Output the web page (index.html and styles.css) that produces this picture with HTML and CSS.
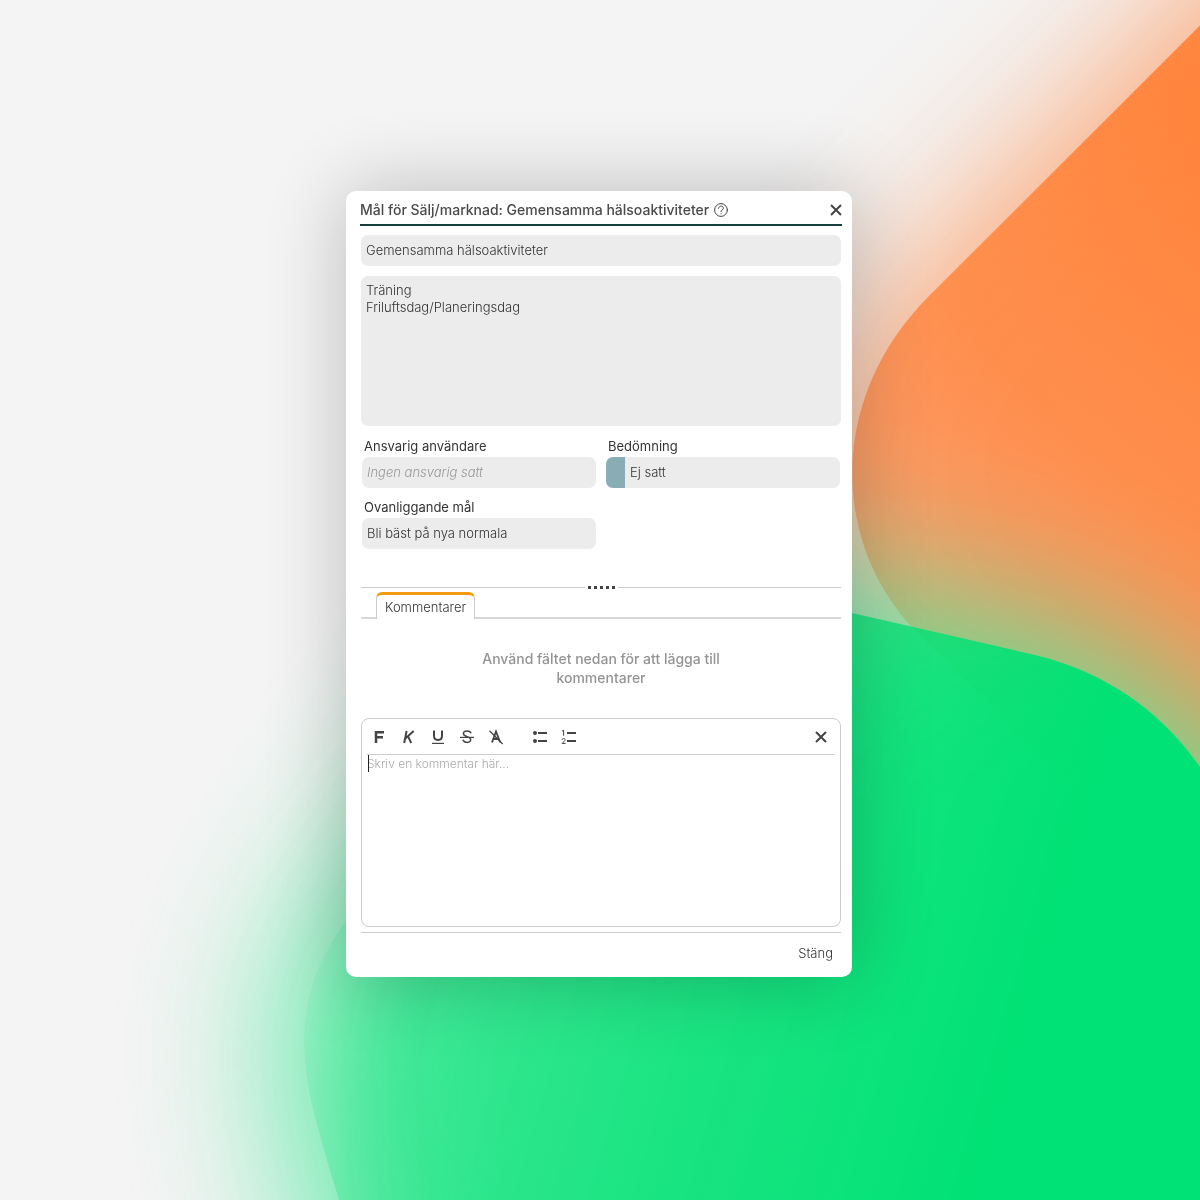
FILE: index.html
```html
<!DOCTYPE html>
<html lang="sv">
<head>
    <meta charset="UTF-8">
    <meta name="viewport" content="width=device-width, initial-scale=1.0">
    <title>Mål för Sälj/marknad</title>
    <link rel="stylesheet" href="styles.css">
</head>
<body>

    <svg class="background" viewBox="0 0 1200 1200" preserveAspectRatio="xMidYMid slice" aria-hidden="true">
        <defs>
            <linearGradient id="orange" gradientUnits="userSpaceOnUse" x1="1180" y1="100" x2="850" y2="500">
                <stop offset="0" stop-color="#ff8136"/>
                <stop offset="0.6" stop-color="#ff8b48"/>
                <stop offset="1" stop-color="#fb9a64"/>
            </linearGradient>
            <linearGradient id="green" gradientUnits="userSpaceOnUse" x1="300" y1="980" x2="980" y2="1180">
                <stop offset="0" stop-color="#00e275" stop-opacity="0.05"/>
                <stop offset="0.15" stop-color="#00e275" stop-opacity="0.3"/>
                <stop offset="0.5" stop-color="#00e275" stop-opacity="0.65"/>
                <stop offset="1" stop-color="#00e275"/>
            </linearGradient>
            <filter id="blur" x="-50%" y="-50%" width="200%" height="200%" color-interpolation-filters="sRGB">
                <feGaussianBlur stdDeviation="80"/>
            </filter>
            <path id="orangeShape" d="M1500 -274 L930 295 C830 394 830 536 910 625 L1500 1220 Z"/>
            <path id="greenShape" d="M1200 767 C1160 710 1105 672 1035 655 L852 613 C700 590 560 670 480 740 L362 900 C303 970 295 1030 312 1105 Q322 1145 339 1200 L400 1500 H1500 V1000 Z"/>
        </defs>
        <use href="#orangeShape" fill="#ff8a48" stroke="#ff8a48" stroke-width="40" opacity="0.75" filter="url(#blur)"/>
        <use href="#orangeShape" fill="url(#orange)" fill-opacity="0.92"/>
        <use href="#greenShape" fill="#48e89a" stroke="#48e89a" stroke-width="40" opacity="0.92" filter="url(#blur)"/>
        <use href="#greenShape" fill="url(#green)"/>
    </svg>

    <main class="page">
        <section class="dialog" role="dialog" aria-labelledby="dialogTitle">
            <header class="dialog-header">
                <h1 id="dialogTitle">Mål för Sälj/marknad: Gemensamma hälsoaktiviteter</h1>
                <button type="button" class="icon-button help" aria-label="Hjälp">
                    <svg width="14" height="14" viewBox="0 0 14 14" fill="none" stroke="#444" stroke-linecap="round">
                        <circle cx="7" cy="7" r="6.4"/>
                        <path d="M4.5 5.3 C4.7 2.3 9.6 2.4 9.4 5.2 C9.3 6.9 7 6.7 7 8.6 M7 10.7 V10.8"/>
                    </svg>
                </button>
                <button type="button" class="icon-button close" aria-label="Stäng fönstret">
                    <svg width="12" height="12" viewBox="0 0 12 12" stroke="#444" stroke-width="2">
                        <path d="M1 1 L11 11 M11 1 L1 11"/>
                    </svg>
                </button>
            </header>

            <form class="dialog-body">
                <input type="text" class="field" aria-label="Namn" value="Gemensamma hälsoaktiviteter" readonly>
                <textarea class="field description" aria-label="Beskrivning" readonly>Träning
Friluftsdag/Planeringsdag</textarea>

                <div class="form-grid">
                    <div class="form-group">
                        <label for="ansvarig">Ansvarig användare</label>
                        <input type="text" class="field" id="ansvarig" placeholder="Ingen ansvarig satt" readonly>
                    </div>
                    <div class="form-group">
                        <label for="bedomning">Bedömning</label>
                        <input type="text" class="field rating" id="bedomning" value="Ej satt" readonly>
                    </div>
                    <div class="form-group">
                        <label for="overliggande">Ovanliggande mål</label>
                        <input type="text" class="field" id="overliggande" value="Bli bäst på nya normala" readonly>
                    </div>
                </div>

                <div class="splitter">
                    <span class="dots"><i></i><i></i><i></i><i></i><i></i></span>
                </div>

                <div class="tabs" role="tablist">
                    <button type="button" class="tab" role="tab" aria-selected="true">Kommentarer</button>
                </div>

                <p class="empty-text">Använd fältet nedan för att lägga till kommentarer</p>

                <div class="editor">
                    <div class="toolbar">
                        <button type="button" class="icon-button" aria-label="Fet">
                            <svg width="16" height="16" viewBox="0 0 16 16" fill="none" stroke="#444" stroke-width="2.5">
                                <path d="M4 14 V2 M3 3.2 H12 M4 8.3 H11"/>
                            </svg>
                        </button>
                        <button type="button" class="icon-button" aria-label="Kursiv">
                            <svg width="16" height="16" viewBox="0 0 16 16" fill="none" stroke="#444" stroke-width="2">
                                <path d="M5.6 2 L3.2 14 M12.7 2 L4.4 9.5 M7.1 7.3 L10.2 14"/>
                            </svg>
                        </button>
                        <button type="button" class="icon-button" aria-label="Understruken">
                            <svg width="16" height="16" viewBox="0 0 16 16" fill="none" stroke="#444" stroke-width="2">
                                <path d="M4 1.5 V7 C4 12.2 12 12.2 12 7 V1.5"/>
                                <path stroke-width="1.2" d="M2 14.4 H14"/>
                            </svg>
                        </button>
                        <button type="button" class="icon-button" aria-label="Genomstruken">
                            <svg width="16" height="16" viewBox="0 0 16 16" fill="none" stroke="#444" stroke-width="1.5">
                                <path d="M12 4.3 C11.2 1 4.2 1.1 4.4 4.6 C4.5 6.5 6.3 7 8 7.6 C10.4 8.4 12 9.2 11.7 11 C11.2 14.2 4.9 14.2 4 10.8"/>
                                <path stroke-width="1.2" d="M1 8.4 H15"/>
                            </svg>
                        </button>
                        <button type="button" class="icon-button" aria-label="Rensa formatering">
                            <svg width="16" height="16" viewBox="0 0 16 16" fill="none" stroke="#444" stroke-width="1.8">
                                <path d="M4 13.5 L8 2.5 L12.3 13.5 M5.5 10 H11"/>
                                <path stroke-width="1.3" d="M1.5 1.8 L14.7 15"/>
                            </svg>
                        </button>
                        <button type="button" class="icon-button list-start" aria-label="Punktlista">
                            <svg width="16" height="16" viewBox="0 0 16 16" fill="#444">
                                <circle cx="3" cy="4" r="2"/>
                                <circle cx="3" cy="12" r="2"/>
                                <path d="M6 3 H15 V5 H6 Z M6 11 H15 V13 H6 Z"/>
                            </svg>
                        </button>
                        <button type="button" class="icon-button" aria-label="Numrerad lista">
                            <svg width="16" height="16" viewBox="0 0 16 16" fill="none" stroke="#444">
                                <path stroke-width="2" d="M6 4 H15 M6 12 H15"/>
                                <path d="M1 2.2 L2.6 1.2 V6.8 M1 10.8 C1.2 9 4.5 9.2 4.1 11 C3.9 12 2 13.2 1.1 14.4 H4.7"/>
                            </svg>
                        </button>
                        <button type="button" class="icon-button close" aria-label="Stäng kommentar">
                            <svg width="12" height="12" viewBox="0 0 12 12" stroke="#444" stroke-width="2">
                                <path d="M1 1 L11 11 M11 1 L1 11"/>
                            </svg>
                        </button>
                    </div>
                    <div class="comment">
                        <span class="caret"></span>
                        <textarea aria-label="Kommentar" placeholder="Skriv en kommentar här..."></textarea>
                    </div>
                </div>
            </form>

            <footer class="dialog-footer">
                <button type="button">Stäng</button>
            </footer>
        </section>
    </main>

</body>
</html>
```
FILE: styles.css
```css
* {
    margin: 0;
    padding: 0;
    box-sizing: border-box;
}
body {
    font-family: Inter, "Open Sans", sans-serif;
    font-size: 13px;
    font-weight: 300;
    color: #333;
    background-color: #f4f4f4;
}
button, input, textarea {
    font: inherit;
    color: inherit;
    border: none;
    outline: none;
    background: none;
}
button {
    cursor: pointer;
}
.background {
    position: fixed;
    inset: 0;
    width: 100%;
    height: 100%;
    z-index: -1;
}
.page {
    min-height: 100vh;
    display: flex;
    align-items: center;
    justify-content: center;
    padding: 0 2px 32px 0;
}
.dialog {
    width: 100%;
    max-width: 506px;
    background-color: #fff;
    border-radius: 10px;
    box-shadow: 0 0 80px rgba(0, 0, 0, 0.24);
}
.dialog-header {
    display: flex;
    align-items: center;
    height: 35px;
    margin: 0 10px 9px 14px;
    padding-top: 4px;
    border-bottom: 2px solid #153f3b;
}
.dialog-header h1 {
    font-size: 14px;
    font-weight: 500;
    color: #4a4a4a;
}
.icon-button {
    display: flex;
    align-items: center;
    justify-content: center;
}
.help {
    margin-left: 5px;
}
.close {
    margin-left: auto;
}
.dialog-body {
    padding: 0 11px 0 15px;
}
.field {
    display: block;
    width: 100%;
    height: 31px;
    padding: 0 5px 2px;
    border-radius: 7px;
    background-color: #ececec;
}
.description {
    height: 150px;
    margin-top: 10px;
    padding-top: 6px;
    line-height: 17px;
    resize: none;
}
.form-grid {
    display: grid;
    grid-template-columns: 1fr 1fr;
    gap: 10px;
    padding: 11px 1px 0;
}
.form-group label {
    display: block;
    padding: 0 2px 2px;
    line-height: 18px;
    font-weight: 400;
}
.field::placeholder {
    color: #999;
    font-style: italic;
}
.rating {
    padding-left: 24px;
    background-image: linear-gradient(#88adb5, #88adb5);
    background-size: 19px 100%;
    background-repeat: no-repeat;
}
.splitter {
    display: flex;
    align-items: center;
    gap: 3px;
    height: 3px;
    margin-top: 37px;
}
.splitter::before, .splitter::after {
    content: "";
    flex: 1;
    height: 1px;
    background-color: #ccc;
}
.dots {
    display: flex;
    gap: 3px;
}
.dots i {
    width: 3px;
    height: 3px;
    background-color: #444;
}
.tabs {
    display: flex;
    height: 30px;
    padding: 3px 15px 0;
    border-bottom: 2px solid #d8d8d8;
}
.tab {
    height: 27px;
    padding: 0 8px;
    border: 1px solid #ccc;
    border-top: 3px solid #f39c12;
    border-bottom: none;
    border-radius: 6px 6px 0 0;
    background-color: #fff;
}
.empty-text {
    max-width: 260px;
    margin: 30px auto 31px;
    font-size: 14px;
    font-weight: 500;
    line-height: 19px;
    text-align: center;
    color: #949494;
}
.editor {
    height: 209px;
    padding: 0 5px;
    border: 1px solid #ccc;
    border-radius: 8px;
}
.toolbar {
    display: flex;
    align-items: center;
    gap: 13px;
    height: 36px;
    padding: 0 8px 0 5px;
    border-bottom: 1px solid #ccc;
}
.list-start {
    margin-left: 15px;
}
.comment {
    position: relative;
    height: 168px;
}
.comment textarea {
    display: block;
    width: 100%;
    height: 100%;
    font-size: 12px;
    line-height: 18px;
    resize: none;
}
.comment textarea::placeholder {
    color: #aaa;
}
.caret {
    position: absolute;
    top: 0;
    left: 1px;
    width: 1px;
    height: 17px;
    background-color: #222;
}
.dialog-footer {
    display: flex;
    align-items: center;
    justify-content: flex-end;
    height: 45px;
    margin: 5px 11px 0 15px;
    padding: 0 8px 4px;
    border-top: 1px solid #ccc;
}
```
